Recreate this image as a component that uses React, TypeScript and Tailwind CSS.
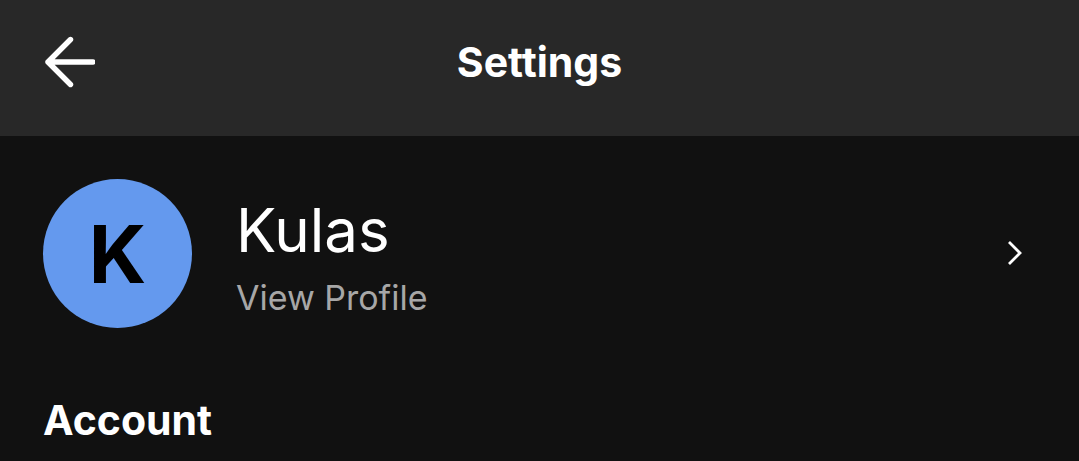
import React from "react";

type ProfileProps = {
  name: string;
};

const BackIcon = () => (
  <svg
    viewBox="0 0 52 52"
    className="size-13"
    fill="none"
    stroke="currentColor"
    strokeWidth="5.4"
    strokeLinecap="round"
    strokeLinejoin="round"
    aria-hidden="true"
  >
    <path d="M27.500 3.500 5 26l22.500 22.500M5 26h45" />
  </svg>
);

const ChevronIcon = () => (
  <svg
    viewBox="0 0 16 26"
    className="h-6.5 w-4"
    fill="none"
    stroke="currentColor"
    strokeWidth="2.8"
    aria-hidden="true"
  >
    <path d="M2 1l11 11L2 23" />
  </svg>
);

const Header = () => (
  <header className="grid h-34 grid-cols-[1fr_auto_1fr] items-center bg-[#282828] px-[43px] pb-3">
    <button type="button" aria-label="Back" className="w-fit cursor-pointer">
      <BackIcon />
    </button>
    <h1 className="text-[41px] leading-12 font-bold">Settings</h1>
  </header>
);

const ProfileRow = ({ name }: ProfileProps) => (
  <a href="#profile" className="flex items-center gap-11">
    <div className="flex size-[149px] shrink-0 items-center justify-center rounded-full bg-[#6499ee] text-[80px] leading-none font-bold text-black">
      {name.charAt(0)}
    </div>
    <div className="flex flex-1 flex-col pt-2">
      <span className="text-6xl leading-18">{name}</span>
      <span className="mt-2 text-[34px] leading-12 text-[#a7a7a7]">
        View Profile
      </span>
    </div>
    <ChevronIcon />
  </a>
);

const App = () => {
  return (
    <div className="min-h-screen bg-[#111111] font-['Inter',sans-serif] text-white">
      <Header />
      <main className="pt-[43px] pr-14 pl-[43px]">
        <ProfileRow name="Kulas" />
        <h2 className="mt-17 text-[41px] leading-12 font-bold">Account</h2>
      </main>
    </div>
  );
};

export default App;
